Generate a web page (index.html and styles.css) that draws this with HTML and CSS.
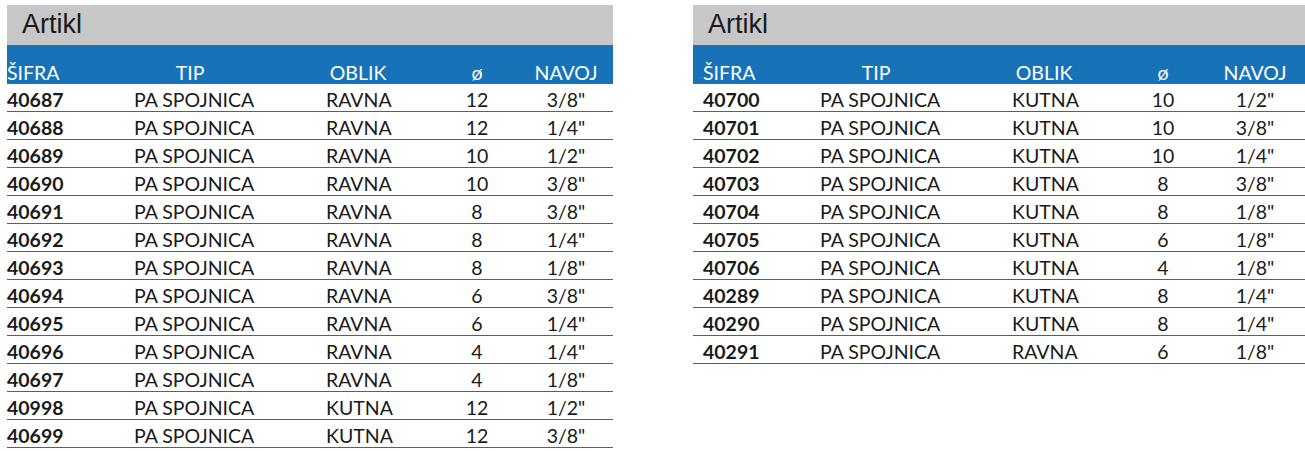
FILE: index.html
```html
<!DOCTYPE html>
<html>
<head>
<meta charset="utf-8">
<link rel="stylesheet" href="styles.css">
</head>
<body>
<div class="page">
  <div class="tbl tbl-left">
    <div class="title">Artikl</div>
    <div class="row head">
      <div class="c c1">ŠIFRA</div><div class="c c2">TIP</div><div class="c c3">OBLIK</div><div class="c c4">ø</div><div class="c c5">NAVOJ</div>
    </div>
    <div class="row"><div class="c c1">40687</div><div class="c c2">PA SPOJNICA</div><div class="c c3">RAVNA</div><div class="c c4">12</div><div class="c c5">3/8"</div></div>
    <div class="row"><div class="c c1">40688</div><div class="c c2">PA SPOJNICA</div><div class="c c3">RAVNA</div><div class="c c4">12</div><div class="c c5">1/4"</div></div>
    <div class="row"><div class="c c1">40689</div><div class="c c2">PA SPOJNICA</div><div class="c c3">RAVNA</div><div class="c c4">10</div><div class="c c5">1/2"</div></div>
    <div class="row"><div class="c c1">40690</div><div class="c c2">PA SPOJNICA</div><div class="c c3">RAVNA</div><div class="c c4">10</div><div class="c c5">3/8"</div></div>
    <div class="row"><div class="c c1">40691</div><div class="c c2">PA SPOJNICA</div><div class="c c3">RAVNA</div><div class="c c4">8</div><div class="c c5">3/8"</div></div>
    <div class="row"><div class="c c1">40692</div><div class="c c2">PA SPOJNICA</div><div class="c c3">RAVNA</div><div class="c c4">8</div><div class="c c5">1/4"</div></div>
    <div class="row"><div class="c c1">40693</div><div class="c c2">PA SPOJNICA</div><div class="c c3">RAVNA</div><div class="c c4">8</div><div class="c c5">1/8"</div></div>
    <div class="row"><div class="c c1">40694</div><div class="c c2">PA SPOJNICA</div><div class="c c3">RAVNA</div><div class="c c4">6</div><div class="c c5">3/8"</div></div>
    <div class="row"><div class="c c1">40695</div><div class="c c2">PA SPOJNICA</div><div class="c c3">RAVNA</div><div class="c c4">6</div><div class="c c5">1/4"</div></div>
    <div class="row"><div class="c c1">40696</div><div class="c c2">PA SPOJNICA</div><div class="c c3">RAVNA</div><div class="c c4">4</div><div class="c c5">1/4"</div></div>
    <div class="row"><div class="c c1">40697</div><div class="c c2">PA SPOJNICA</div><div class="c c3">RAVNA</div><div class="c c4">4</div><div class="c c5">1/8"</div></div>
    <div class="row"><div class="c c1">40998</div><div class="c c2">PA SPOJNICA</div><div class="c c3">KUTNA</div><div class="c c4">12</div><div class="c c5">1/2"</div></div>
    <div class="row"><div class="c c1">40699</div><div class="c c2">PA SPOJNICA</div><div class="c c3">KUTNA</div><div class="c c4">12</div><div class="c c5">3/8"</div></div>
  </div>
  <div class="tbl tbl-right">
    <div class="title">Artikl</div>
    <div class="row head">
      <div class="c c1">ŠIFRA</div><div class="c c2">TIP</div><div class="c c3">OBLIK</div><div class="c c4">ø</div><div class="c c5">NAVOJ</div>
    </div>
    <div class="row"><div class="c c1">40700</div><div class="c c2">PA SPOJNICA</div><div class="c c3">KUTNA</div><div class="c c4">10</div><div class="c c5">1/2"</div></div>
    <div class="row"><div class="c c1">40701</div><div class="c c2">PA SPOJNICA</div><div class="c c3">KUTNA</div><div class="c c4">10</div><div class="c c5">3/8"</div></div>
    <div class="row"><div class="c c1">40702</div><div class="c c2">PA SPOJNICA</div><div class="c c3">KUTNA</div><div class="c c4">10</div><div class="c c5">1/4"</div></div>
    <div class="row"><div class="c c1">40703</div><div class="c c2">PA SPOJNICA</div><div class="c c3">KUTNA</div><div class="c c4">8</div><div class="c c5">3/8"</div></div>
    <div class="row"><div class="c c1">40704</div><div class="c c2">PA SPOJNICA</div><div class="c c3">KUTNA</div><div class="c c4">8</div><div class="c c5">1/8"</div></div>
    <div class="row"><div class="c c1">40705</div><div class="c c2">PA SPOJNICA</div><div class="c c3">KUTNA</div><div class="c c4">6</div><div class="c c5">1/8"</div></div>
    <div class="row"><div class="c c1">40706</div><div class="c c2">PA SPOJNICA</div><div class="c c3">KUTNA</div><div class="c c4">4</div><div class="c c5">1/8"</div></div>
    <div class="row"><div class="c c1">40289</div><div class="c c2">PA SPOJNICA</div><div class="c c3">KUTNA</div><div class="c c4">8</div><div class="c c5">1/4"</div></div>
    <div class="row"><div class="c c1">40290</div><div class="c c2">PA SPOJNICA</div><div class="c c3">KUTNA</div><div class="c c4">8</div><div class="c c5">1/4"</div></div>
    <div class="row"><div class="c c1">40291</div><div class="c c2">PA SPOJNICA</div><div class="c c3">RAVNA</div><div class="c c4">6</div><div class="c c5">1/8"</div></div>
  </div>
</div>
</body>
</html>
```

FILE: styles.css
```css
html, body {
  margin: 0;
  padding: 0;
  background: #ffffff;
}
.page {
  display: flex;
  align-items: flex-start;
  gap: 80px;
  padding: 5px 0 0 7px;
  font-family: Lato, "Open Sans", sans-serif;
  color: #1a1a1a;
}
.tbl {
  display: flex;
  flex-direction: column;
}
.tbl-left { width: 606px; }
.tbl-right { width: 612px; }
.title {
  height: 40px;
  background: #c6c7c6;
  font-family: "Liberation Sans", Arial, sans-serif;
  font-size: 27px;
  line-height: 38px;
  padding-left: 15px;
  color: #1a1a1a;
}
.row {
  display: grid;
  grid-template-columns: 120px 154px 154px 84px 94px;
  border-bottom: 1px solid #1a6fb5;
  font-size: 19.5px;
  line-height: 23px;
}
.tbl-right .row {
  grid-template-columns: 120px 154px 154px 84px 100px;
}
.c {
  padding-top: 4px;
  white-space: nowrap;
}
.row.head {
  background: #1772b8;
  color: #ffffff;
  border-bottom: none;
}
.row.head .c {
  padding-top: 16px;
}
.c1 { font-weight: 700; }
.head .c1 { font-weight: 400; }
.tbl-right .c1 { padding-left: 10px; }
.c2 { padding-left: 7px; }
.head .c2 { padding-left: 0; padding-right: 28px; text-align: center; }
.c3 { padding-left: 45px; }
.head .c3 { padding-left: 0; text-align: center; }
.c4 { text-align: center; }
.c5 { text-align: center; }
```
